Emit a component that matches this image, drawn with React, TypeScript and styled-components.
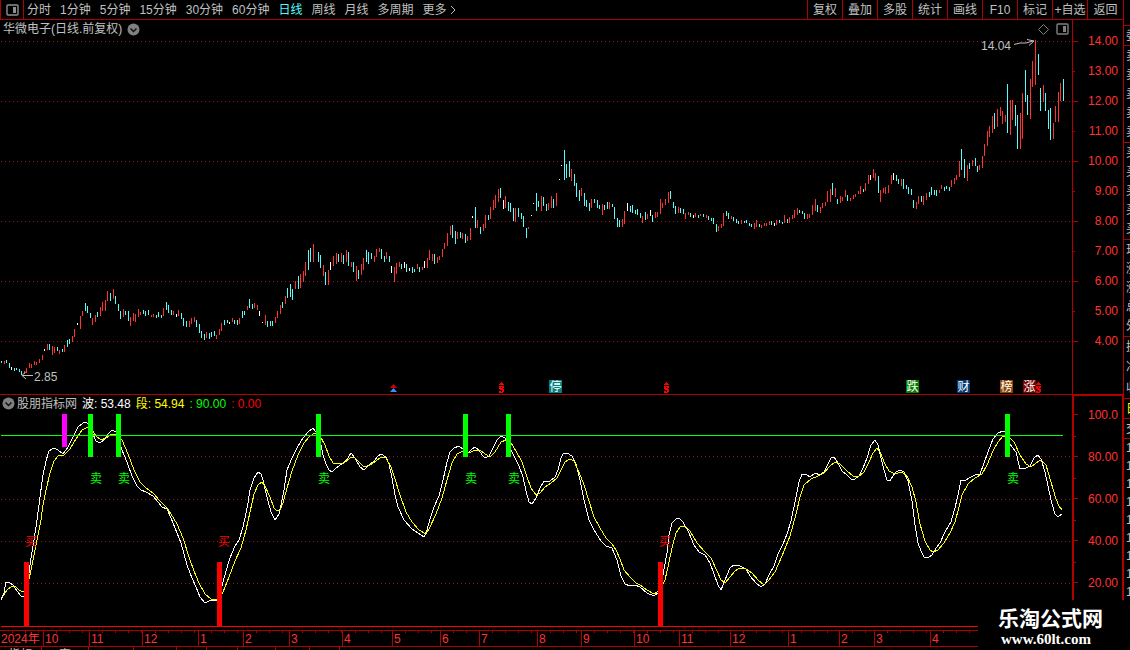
import React from 'react'
import styled, { createGlobalStyle } from 'styled-components'

type BarKind = 'rise' | 'fall' | 'flat'

const colors = {
  line: '#b00000',
  axis: '#ff3232',
  text: '#c0c0c0',
  rise: '#ff3232',
  fall: '#54fcfc',
  flat: '#ffffff',
}

// every entry is x:top-bottom
const bars: Record<BarKind, string> = {
  rise: `4:361-364 24:371-374 26:368-373 29:363-368 31:364-368 34:361-365 36:362-365 39:359-363 42:355-360
    47:344-350 52:346-355 54:347-353 59:350-354 64:345-352 72:336-342 74:329-337 80:316-329 82:311-316
    92:318-325 95:315-322 100:307-316 102:302-311 105:300-311 107:291-301 113:289-299 123:309-317 130:317-326
    133:313-321 135:314-322 138:309-317 140:312-315 151:315-317 153:314-317 163:308-316 173:311-315 178:310-316
    189:321-327 191:318-324 194:317-322 206:332-338 216:335-339 219:329-335 221:323-331 232:318-322 239:318-324
    247:306-310 254:303-308 257:305-310 265:315-325 275:317-323 277:311-318 280:305-314 285:296-304 295:281-289
    300:274-288 303:271-282 305:262-276 313:244-262 323:265-276 328:270-285 333:256-266 336:253-264 341:253-262
    346:250-262 351:262-267 356:266-281 361:264-275 363:258-270 374:256-262 376:249-257 379:248-252 386:252-259
    394:267-282 396:263-274 399:262-267 417:264-269 422:267-270 427:258-268 429:250-260 432:254-261 437:257-263
    439:256-260 442:249-257 444:243-249 447:233-246 450:226-235 457:232-239 462:233-239 467:236-241 470:228-240
    477:220-228 483:224-231 485:215-228 490:207-219 493:200-210 495:195-208 498:189-202 505:196-208 515:208-222
    528:227-229 541:196-211 548:203-210 551:196-208 556:193-206 571:169-181 581:188-196 591:199-208 602:204-215
    609:202-209 622:219-227 624:211-224 642:216-223 647:214-219 655:212-218 657:212-217 660:199-214 662:203-208
    665:199-205 668:192-203 678:207-213 685:213-219 688:212-215 695:213-217 700:214-216 706:215-218 718:226-231
    721:224-228 723:213-226 731:216-219 741:220-224 754:223-229 756:220-227 761:225-228 764:223-226 766:223-226
    769:221-225 776:220-225 784:215-223 789:217-223 792:215-219 794:210-218 797:208-215 807:214-219 809:214-218
    812:205-215 815:199-211 820:207-213 822:203-208 825:202-206 827:191-202 830:189-202 835:188-197 840:196-203
    842:197-201 845:190-197 850:198-201 853:195-199 855:194-197 858:191-194 860:186-194 865:183-191 868:175-184
    873:169-178 875:173-181 880:190-202 883:188-193 885:187-194 888:185-193 891:175-184 901:179-186 916:202-209
    918:196-204 923:196-205 926:193-200 939:190-193 941:185-189 951:180-187 954:178-184 956:175-180 959:161-177
    967:165-181 972:160-166 979:165-170 982:156-168 984:144-156 987:131-146 989:126-137 992:116-133 997:109-127
    1000:107-116 1002:111-124 1005:115-122 1010:100-135 1012:100-120 1020:113-149 1022:93-139 1030:79-119
    1032:61-87 1035:40-85 1043:85-102 1053:123-139 1055:106-122 1058:92-122 1060:83-101`,
  fall: `1:361-363 6:360-363 9:363-368 14:368-371 16:368-370 19:369-372 21:371-375 49:344-350 57:347-351
    62:349-352 67:340-347 69:339-344 85:303-311 87:306-313 90:313-318 97:312-317 110:293-301 115:296-304
    118:304-311 120:311-319 125:311-315 128:311-321 143:310-314 145:311-316 148:310-315 156:315-318 158:312-317
    161:315-318 166:302-310 168:305-313 171:310-315 181:313-319 183:318-326 186:321-327 196:320-327 199:324-333
    201:331-338 204:334-340 209:333-339 211:332-337 214:331-336 224:320-325 227:320-323 234:320-324 237:320-325
    242:311-318 244:311-315 249:299-308 252:304-309 267:321-327 270:321-326 272:321-326 282:302-308 287:288-298
    290:284-297 292:289-300 298:276-289 308:250-270 310:248-262 318:252-262 320:255-268 325:272-285 338:254-262
    343:255-264 348:252-266 353:262-272 358:270-279 366:250-262 368:252-264 371:253-259 381:249-259 384:256-262
    389:256-262 401:264-269 406:264-272 412:267-273 414:269-272 419:267-272 434:254-264 452:225-238 455:231-244
    460:232-238 465:234-243 475:207-228 480:227-234 488:215-220 500:188-198 508:202-211 510:203-212 513:208-221
    518:208-217 521:213-219 523:216-227 526:228-238 536:193-211 538:201-207 543:197-206 546:204-211 553:199-208
    564:150-180 566:164-178 569:161-177 574:174-186 576:183-197 579:190-201 584:193-206 586:200-207 589:203-211
    594:199-203 597:200-208 599:205-209 604:205-210 607:202-209 612:204-207 614:207-219 617:218-227 619:220-227
    630:206-212 632:205-213 635:210-214 637:209-215 640:213-218 645:212-220 652:215-222 670:191-199 673:202-208
    675:206-214 680:208-213 683:209-214 690:213-217 698:215-218 703:214-217 708:216-220 711:218-221 713:218-224
    716:224-232 726:211-216 728:213-219 733:217-221 736:219-223 738:221-224 744:221-223 746:220-223 749:223-226
    751:224-227 759:224-227 771:221-225 779:220-223 782:222-224 787:219-223 799:210-213 802:211-214 804:213-219
    817:205-212 832:183-195 837:199-204 847:195-201 863:189-192 878:176-193 896:175-181 898:179-184 903:179-189
    906:185-189 908:187-194 911:189-195 913:200-208 921:196-202 929:192-197 931:187-195 934:190-195 936:190-196
    944:187-191 946:186-189 949:187-191 961:149-170 964:159-178 969:163-169 975:158-166 977:166-172 994:113-129
    1007:84-133 1015:105-126 1017:115-149 1025:70-102 1027:95-115 1038:54-75 1040:88-111 1045:93-111
    1048:110-129 1050:108-140 1063:79-101`,
  flat: `11:367-370 44:349-351 77:323-325 176:314-317 229:322-324 259:311-316 262:322-323 330:262-270
    391:266-273 404:262-268 409:268-271 424:261-268 472:216-218 503:200-209 531:215-216 533:203-204 559:179-180
    561:165-166 627:203-211 650:210-216 693:215-218 774:223-226 870:175-180 893:173-180`,
}

const fastLine = `1,600 4,593 6,582 10,583 13,585 17,591 21,596 24,597 28,580 31,558 34,540 37,520 40,497 43,475
  46,461 49,451 54,448 58,450 63,454 68,447 73,437 78,427 83,423 86,422 88,424 92,432 96,441 100,443 104,440
  108,434 112,430 116,432 119,440 122,450 127,462 132,476 137,486 141,490 146,492 153,496 158,502 162,507
  167,509 171,518 175,528 181,543 187,565 192,578 196,587 200,597 205,603 211,600 218,600 222,586 226,571
  230,558 235,546 239,540 243,527 245,518 248,503 250,490 254,478 258,472 261,474 263,480 267,497 271,512
  275,520 279,514 281,505 284,490 287,470 292,458 297,448 303,438 308,432 313,428 316,432 320,440 323,455
  326,464 329,470 332,472 336,468 343,463 348,458 351,453 355,458 360,467 364,470 368,466 374,461 378,456
  381,454 386,457 389,464 392,478 395,495 398,507 404,520 412,529 418,533 424,537 427,530 430,519 434,507
  439,496 443,480 447,462 450,452 454,448 459,446 463,449 468,453 471,450 475,447 479,450 482,455 485,458
  489,456 493,448 497,440 501,436 505,438 509,446 514,456 519,466 523,477 526,491 529,502 532,504 536,498
  540,488 544,481 550,481 555,477 558,470 561,458 563,454 567,453 572,456 576,464 580,480 584,500 589,520
  594,530 601,541 606,546 612,548 617,560 621,576 625,584 630,586 635,585 640,587 647,593 654,596 659,592
  663,575 667,553 669,535 672,523 676,519 679,518 683,522 689,533 694,545 699,552 705,555 710,563 714,574
  718,585 721,590 725,580 730,568 734,565 740,566 746,569 750,576 756,583 761,587 765,584 769,575 774,566
  778,554 783,544 787,534 791,521 795,502 799,482 802,474 806,474 810,477 815,473 820,475 824,472 828,464
  831,458 834,457 838,463 842,471 847,475 851,479 855,479 859,476 863,468 867,458 871,445 875,440 878,445
  881,458 884,470 887,480 890,481 893,476 896,472 900,470 904,472 908,481 912,501 915,525 918,543 921,551
  924,557 928,558 932,555 936,548 940,543 945,532 951,522 955,508 958,495 961,480 966,480 971,477 975,475
  980,474 984,463 988,452 993,439 998,433 1003,431 1008,433 1010,444 1016,452 1020,469 1026,468 1030,466
  1034,458 1038,455 1041,459 1045,472 1048,486 1052,504 1055,514 1058,517 1062,514`

const slowLine = `1,598 4,595 7,590 11,587 15,586 19,590 23,592 27,588 31,570 35,550 38,535 41,520 43,505 46,490
  50,473 54,461 58,456 64,455 70,449 76,439 82,430 88,427 92,430 96,436 101,440 106,438 112,434 117,434
  122,440 128,454 134,470 140,482 146,488 153,493 160,501 167,508 171,514 177,524 183,538 189,557 194,571
  199,583 205,594 211,599 218,600 223,592 229,577 235,561 241,548 246,530 250,512 254,494 258,485 262,482
  265,486 270,497 274,508 277,511 280,510 283,503 287,488 292,471 298,455 304,443 310,436 315,433 320,436
  325,445 329,456 333,463 338,464 344,463 350,458 354,457 359,462 364,467 370,465 376,461 381,457 386,458
  391,467 395,479 400,495 406,512 412,522 419,530 426,534 430,527 436,514 442,498 447,480 452,463 457,454
  463,451 469,453 475,450 480,450 485,454 490,457 495,452 501,442 506,440 511,443 516,451 522,462 527,477
  531,488 536,495 540,493 545,487 551,483 557,478 561,470 565,462 570,459 574,461 579,472 584,485 589,501
  594,517 600,528 606,538 612,544 616,550 620,559 624,570 630,577 636,583 640,585 647,590 654,594 660,590
  665,580 668,567 672,548 676,533 680,527 685,526 690,531 697,543 705,552 711,558 717,571 721,580 725,583
  730,577 735,571 740,568 746,569 752,573 758,580 764,585 769,580 775,572 782,556 790,536 796,514 800,497
  804,485 811,479 818,476 824,473 830,466 835,462 840,464 847,471 853,476 858,477 864,472 869,462 873,453
  877,448 880,452 885,464 889,471 893,473 898,473 902,472 907,476 912,487 916,502 920,524 925,541 930,550
  933,552 938,550 944,543 950,533 955,522 959,507 962,495 968,484 975,478 982,474 987,465 993,451 998,442
  1003,436 1008,436 1014,442 1020,455 1026,464 1031,467 1036,463 1041,460 1046,465 1051,482 1056,499
  1059,506 1062,510`

const periods = ['分时', '1分钟', '5分钟', '15分钟', '30分钟', '60分钟', '日线', '周线', '月线', '多周期']
const tools = ['复权', '叠加', '多股', '统计', '画线', 'F10', '标记', '+自选', '返回']
const prices = ['14.00', '13.00', '12.00', '11.00', '10.00', '9.00', '8.00', '7.00', '6.00', '5.00', '4.00']
const levels = ['100.0', '80.00', '60.00', '40.00', '20.00']

const sellBars = [88, 116, 316, 463, 506, 1005]
const buyBars = [24, 217, 658]

const events = [
  { x: 549, label: '停', fill: '#008080' },
  { x: 906, label: '跌', fill: '#008000' },
  { x: 957, label: '财', fill: '#003c78' },
  { x: 1000, label: '榜', fill: '#8c4600' },
  { x: 1023, label: '涨', fill: '#780000' },
]

const months = [
  { label: '2024年', size: 43 },
  { label: '10', size: 46 },
  { label: '11', size: 53 },
  { label: '12', size: 56 },
  { label: '1', size: 45 },
  { label: '2', size: 46 },
  { label: '3', size: 53 },
  { label: '4', size: 50 },
  { label: '5', size: 48 },
  { label: '6', size: 39 },
  { label: '7', size: 58 },
  { label: '8', size: 44 },
  { label: '9', size: 53 },
  { label: '10', size: 45 },
  { label: '11', size: 51 },
  { label: '12', size: 58 },
  { label: '1', size: 51 },
  { label: '2', size: 35 },
  { label: '3', size: 56 },
  { label: '4', size: 142 },
]

const tabs = [
  { label: '指标', size: 42 },
  { label: '窗', size: 47 },
  { label: '', size: 45 },
  { label: '', size: 43 },
  { label: '', size: 30 },
  { label: '', size: 31 },
  { label: '', size: 38 },
  { label: '', size: 34 },
  { label: '', size: 30 },
]

const quoteGroups = [
  { rows: ['委'], size: 20 },
  { rows: ['卖', '卖', '卖', '卖', '卖'], size: 97 },
  { rows: ['买', '买', '买', '买', '买'], size: 97 },
  { rows: ['现', '涨', '涨', '总', '外'], size: 97 },
  { rows: ['换', '净', '收'], size: 62 },
  { rows: ['日'], size: 20, color: '#ffff00' },
  { rows: ['交'], size: 20 },
]

const toPath = (list: string) =>
  list
    .trim()
    .split(/\s+/)
    .map(item => {
      const [x, top, bottom] = item.split(/[:-]/)
      return `M${x} ${top}h1V${bottom}h-1z`
    })
    .join('')

const PanelIcon = ({ stroke = '#808080' }: { stroke?: string }) => (
  <svg width="13" height="12" viewBox="0 0 13 12">
    <rect x="1" y="1" width="11" height="10" rx="1" fill="none" stroke={stroke} strokeWidth="1.4" />
    <rect x="7" y="3" width="3" height="6" fill={stroke} />
  </svg>
)

const CircleChevron = () => (
  <svg width="13" height="13" viewBox="0 0 13 13">
    <circle cx="6.5" cy="6.5" r="6" fill="#808080" />
    <path d="M3.5 5.5l3 3 3-3" fill="none" stroke="#101010" strokeWidth="1.5" />
  </svg>
)

const DollarMark = ({ x }: { x: number }) => (
  <path
    transform={`translate(${x} 382)`}
    d="M3 0h1v1h1v1h1v1H1V2h1V1h1zM1 4h5v2H4V5H3v1h2v1h1v3H5v1H1V9h2v1h1V8H2V7H1z"
    fill="#ff0000"
    shapeRendering="crispEdges"
  />
)

const PriceChart = () => (
  <Drawing viewBox="0 38 1072 356" role="img" aria-label="日线">
    {[41, 101, 161, 221, 281, 341].map(y => (
      <GridLine key={y} x1="1" x2="1072" y1={y + 0.5} y2={y + 0.5} />
    ))}
    {(Object.keys(bars) as BarKind[]).map(kind => (
      <path key={kind} d={toPath(bars[kind])} fill={colors[kind]} shapeRendering="crispEdges" />
    ))}
    <ChartText x="981" y="50">
      14.04
    </ChartText>
    <Arrow d="M1014 44.5l6-1.5h6l7-2M1027 39.5l7 1.5-5 4.5" />
    <ChartText x="34" y="381">
      2.85
    </ChartText>
    <Arrow d="M33 375.5H22M26 371.5l-4 4 4 3.5" />

    <path d="M390 388l3.5-4 3.5 4z" fill="#d00000" />
    <path d="M390 392l3.5-4 3.5 4z" fill="#3c8cff" />
    <DollarMark x={498} />
    <DollarMark x={663} />
    {events.map(event => (
      <g key={event.label}>
        <rect x={event.x} y="380" width="13" height="13" fill={event.fill} />
        <ChartText x={event.x + 0.5} y="391" $color="#fff">
          {event.label}
        </ChartText>
      </g>
    ))}
    <DollarMark x={1035} />
  </Drawing>
)

const WaveChart = () => (
  <Drawing viewBox="0 412 1072 218" role="img" aria-label="股朋指标网">
    {[456, 499, 541, 583].map(y => (
      <GridLine key={y} x1="1" x2="1072" y1={y + 0.5} y2={y + 0.5} />
    ))}
    <Curve points={fastLine} stroke="#ffffff" />
    <Curve points={slowLine} stroke="#ffff00" />
    <rect x="1" y="435" width="1062" height="1" fill="#00ff00" />
    <rect x="62" y="414" width="5" height="33" fill="#ff00ff" />
    {sellBars.map(x => (
      <g key={x}>
        <rect x={x} y="414" width="5" height="43" fill="#00ff00" />
        <ChartText x={x + 2} y="483" $color="#00ff00">
          卖
        </ChartText>
      </g>
    ))}
    {buyBars.map(x => (
      <g key={x}>
        <rect x={x} y="562" width="5" height="64" fill="#ff0000" />
        <ChartText x={x + 1} y="546" $color="#ff0000">
          买
        </ChartText>
      </g>
    ))}
    <rect x="1" y="626" width="1071" height="1" fill="#ff0000" />
  </Drawing>
)

const App: React.FC = () => {
  return (
    <>
      <GlobalStyle />
      <Screen>
        <Main>
          <Toolbar>
            <IconButton aria-label="侧栏">
              <PanelIcon stroke="#909090" />
            </IconButton>
            <Periods>
              {periods.map(name => (
                <PeriodButton key={name} $active={name === '日线'}>
                  {name}
                </PeriodButton>
              ))}
              <PeriodButton>
                更多
                <svg width="10" height="10" viewBox="0 0 10 10">
                  <path d="M4 1l4 4-4 4" fill="none" stroke={colors.text} />
                </svg>
              </PeriodButton>
            </Periods>
            {tools.map(name => (
              <ToolButton key={name}>{name}</ToolButton>
            ))}
          </Toolbar>

          <Panel>
            <Plot>
              <TitleRow>
                <span>华微电子(日线.前复权)</span>
                <RoundButton aria-label="展开">
                  <CircleChevron />
                </RoundButton>
                <TitleIcons>
                  <svg width="11" height="11" viewBox="0 0 11 11">
                    <path d="M5.5 0.5l5 5-5 5-5-5z" fill="none" stroke="#808080" />
                  </svg>
                  <PanelIcon />
                </TitleIcons>
              </TitleRow>
              <PriceChart />
            </Plot>
            <PriceAxis>
              {prices.map((price, i) => (
                <PriceMark key={price} $major={i % 2 === 0}>
                  {price}
                </PriceMark>
              ))}
            </PriceAxis>
          </Panel>

          <Panel>
            <LowerPlot>
              <LegendRow>
                <RoundButton aria-label="展开">
                  <CircleChevron />
                </RoundButton>
                <LegendName>股朋指标网</LegendName>
                <LegendItem $color="#ffffff">波: 53.48</LegendItem>
                <LegendItem $color="#ffff00">段: 54.94</LegendItem>
                <LegendItem $color="#00ff00">: 90.00</LegendItem>
                <LegendItem $color="#ff0000">: 0.00</LegendItem>
              </LegendRow>
              <WaveChart />
              <TimeAxis>
                {months.map((month, i) => (
                  <Month key={i} $size={month.size}>
                    {month.label}
                  </Month>
                ))}
              </TimeAxis>
              <Tabs>
                {tabs.map((tab, i) => (
                  <Tab key={i} $size={tab.size}>
                    {tab.label}
                  </Tab>
                ))}
              </Tabs>
            </LowerPlot>
            <LevelAxis>
              {levels.map(level => (
                <LevelMark key={level}>{level}</LevelMark>
              ))}
            </LevelAxis>
          </Panel>
        </Main>

        <Quotes>
          {quoteGroups.map((group, i) => (
            <QuoteGroup key={i} $size={group.size} $color={group.color}>
              {group.rows.map((row, n) => (
                <QuoteCell key={n}>{row}</QuoteCell>
              ))}
            </QuoteGroup>
          ))}
          <Times>
            {Array.from({ length: 9 }, (_, i) => (
              <QuoteCell key={i}>14</QuoteCell>
            ))}
          </Times>
        </Quotes>

        <Watermark>
          <SiteName>乐淘公式网</SiteName>
          <SiteAddress>www.60lt.com</SiteAddress>
        </Watermark>
      </Screen>
    </>
  )
}

export default App

const GlobalStyle = createGlobalStyle`
  * {
    box-sizing: border-box;
  }
  body {
    margin: 0;
    background: #000;
    color: ${colors.text};
    font: 12px/16px 'Liberation Sans', 'Noto Sans CJK SC', sans-serif;
  }
  button {
    padding: 0;
    border: 0;
    background: none;
    color: inherit;
    font: inherit;
    white-space: nowrap;
  }
`
const Screen = styled.div`
  position: relative;
  display: flex;
  height: 100vh;
  overflow: hidden;
`
const Main = styled.div`
  flex: 1;
  min-width: 0;
`
const Toolbar = styled.div`
  display: flex;
  height: 20px;
  border-bottom: 1px solid ${colors.line};
  border-left: 1px solid ${colors.line};
`
const IconButton = styled.button`
  display: flex;
  align-items: center;
  justify-content: center;
  width: 23px;
  border-right: 1px solid ${colors.line};
`
const Periods = styled.div`
  display: flex;
  flex: 1;
  gap: 9px;
  padding-left: 3px;
`
const PeriodButton = styled.button<{ $active?: boolean }>`
  display: flex;
  align-items: center;
  color: ${props => (props.$active ? colors.fall : colors.text)};
`
const ToolButton = styled.button`
  width: 35px;
  border-left: 1px solid ${colors.line};
  &:last-child {
    width: 36px;
  }
`
const Panel = styled.div`
  display: grid;
  grid-template-columns: minmax(0, 1fr) 51px;
`
const Plot = styled.div`
  display: flex;
  flex-direction: column;
`
const LowerPlot = styled(Plot)`
  border-top: 1px solid ${colors.line};
`
const TitleRow = styled.div`
  display: flex;
  align-items: center;
  gap: 5px;
  height: 18px;
  padding: 0 3px 0 3px;
`
const RoundButton = styled.button`
  display: flex;
`
const TitleIcons = styled.div`
  display: flex;
  align-items: center;
  gap: 7px;
  margin-left: auto;
`
const LegendRow = styled.div`
  display: flex;
  align-items: center;
  height: 17px;
  padding-left: 2px;
`
const LegendName = styled.span`
  margin-left: 2px;
`
const LegendItem = styled.span<{ $color: string }>`
  margin-left: 5px;
  color: ${props => props.$color};
`
const Drawing = styled.svg`
  display: block;
  width: 100%;
  height: auto;
`
const GridLine = styled.line`
  stroke: #a01414;
  stroke-dasharray: 1 3;
  shape-rendering: crispEdges;
`
const Curve = styled.polyline`
  fill: none;
  shape-rendering: crispEdges;
`
const Arrow = styled.path`
  fill: none;
  stroke: ${colors.text};
`
const ChartText = styled.text<{ $color?: string }>`
  fill: ${props => props.$color || colors.text};
  font-size: 12px;
`
const PriceAxis = styled.div`
  padding-top: 13px;
  border-left: 1px solid ${colors.line};
  color: ${colors.axis};
`
const PriceMark = styled.div<{ $major: boolean }>`
  display: flex;
  justify-content: space-between;
  height: 30px;
  padding-right: 5px;
  &::before {
    content: '';
    width: ${props => (props.$major ? 5 : 2)}px;
    height: 1px;
    margin-top: 8px;
    background: ${colors.line};
  }
`
const LevelAxis = styled.div`
  padding-top: 11px;
  border: 2px solid ${colors.line};
  border-bottom: 0;
  border-right-width: 1px;
  color: ${colors.axis};
`
const LevelMark = styled.div`
  display: flex;
  justify-content: space-between;
  height: 42px;
  padding-right: 4px;
  background: linear-gradient(${colors.line}, ${colors.line}) 0 29px / 2px 1px no-repeat;
  &::before {
    content: '';
    width: 4px;
    height: 1px;
    margin-top: 7px;
    background: ${colors.line};
  }
`
const TimeAxis = styled.div`
  display: flex;
  height: 17px;
  border-top: 1px solid ${colors.line};
  border-bottom: 1px solid ${colors.line};
  color: ${colors.axis};
`
const Month = styled.div<{ $size: number }>`
  flex: ${props => props.$size} 1 ${props => props.$size}px;
  min-width: 0;
  padding-left: 1px;
  background: repeating-linear-gradient(90deg, transparent 0 12px, ${colors.line} 12px 13px) 0 0 / 100% 2px no-repeat;
  white-space: nowrap;
  & + & {
    border-left: 1px solid ${colors.line};
  }
`
const Tabs = styled.div`
  display: flex;
  height: 3px;
  overflow: hidden;
`
const Tab = styled.button<{ $size: number }>`
  flex: 0 0 ${props => props.$size}px;
  height: 16px;
  border-right: 1px solid ${colors.line};
`
const Quotes = styled.div`
  width: 7px;
  padding-top: 25px;
  overflow: hidden;
  border-left: 1px solid ${colors.line};
`
const QuoteGroup = styled.div<{ $size: number; $color?: string }>`
  display: grid;
  grid-auto-rows: 1fr;
  height: ${props => props.$size}px;
  border-top: 1px solid ${colors.line};
  color: ${props => props.$color || colors.text};
`
const QuoteCell = styled.div`
  display: flex;
  align-items: center;
  padding-left: 2px;
  white-space: nowrap;
`
const Times = styled.div`
  display: grid;
  grid-auto-rows: 18px;
  border-top: 1px solid ${colors.line};
`
const Watermark = styled.div`
  position: absolute;
  right: 0;
  bottom: 0;
  width: 152px;
  height: 50px;
  padding: 8px 0 0 20px;
  background: #000;
  color: #fff;
  font-weight: bold;
`
const SiteName = styled.div`
  font-size: 21px;
  line-height: 22px;
`
const SiteAddress = styled.div`
  padding-left: 3px;
  font-family: 'Liberation Serif', serif;
  font-size: 15px;
  line-height: 18px;
`
